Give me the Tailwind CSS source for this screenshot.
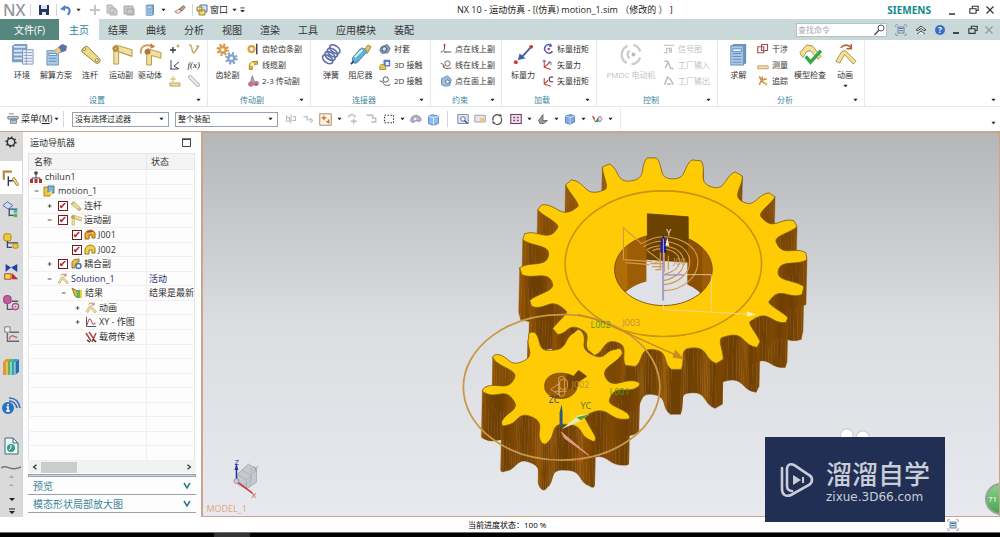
<!DOCTYPE html>
<html lang="zh-CN">
<head>
<meta charset="utf-8">
<title>NX 10 - 运动仿真</title>
<script src="https://cdn.jsdelivr.net/npm/@tailwindcss/browser@4"></script>
</head>
<body class="flex h-screen min-h-[537px] flex-col overflow-hidden bg-white font-['Open_Sans','Noto_Sans_CJK_SC',sans-serif] text-[8px] leading-[12px] text-[#333]">
<svg class="hidden">
  <symbol id="caret" viewBox="0 0 6 4"><path d="M.5 .5h5L3 3.5z" fill="#222"/></symbol>
  <symbol id="link" viewBox="0 0 24 24"><g stroke="#8a7a3a" fill="#f0dc8a"><path d="M3 7l3-3a2.500 2.500 0 0 1 3 0L21 16a3 3 0 0 1-4 4.500L3 9z"/><circle cx="5.500" cy="6.500" r="1.500" fill="#fff"/><circle cx="18.500" cy="18" r="1.500" fill="#fff"/></g></symbol>
  <symbol id="joint" viewBox="0 0 24 24"><g stroke="#b39a50" fill="#f3e09a"><path d="M3 5l3-3 17 5v7L9 9v13H4V9z"/><path d="M9 9l14 5" fill="none"/><circle cx="6" cy="6" r="3" fill="#b8823c"/><circle cx="6" cy="6" r="1" fill="#fff"/></g></symbol>
  <symbol id="doc" viewBox="0 0 24 24"><path d="M4 3l3-2h13v20l-3 2H4z" fill="#6b93bb"/><rect x="4" y="3" width="13" height="20" fill="#a9cbe8" stroke="#6c91b5"/><path d="M6 6h9v3H6zM6 11h9M6 14h9M6 17h9M6 20h9" stroke="#5f8bb8" fill="#e9f4ff"/></symbol>
  <symbol id="cog" viewBox="0 0 16 16"><circle cx="8" cy="8" r="6" fill="none" stroke="currentColor" stroke-width="3" stroke-dasharray="2.360 2.360"/><circle cx="8" cy="8" r="4" fill="currentColor" fill-opacity=".8" stroke="currentColor" stroke-width="2"/><circle cx="8" cy="8" r="1.800" fill="#fff"/></symbol>
  <symbol id="cube" viewBox="0 0 16 16"><path d="M2 4l7-2 5 2v8l-6 3-6-2z" fill="#7fa8e0" stroke="#4a6fb0"/><path d="M2 4l6 2 6-2M8 6v9" stroke="#dfeaff" fill="none"/></symbol>
  <symbol id="ghost" viewBox="0 0 16 16"><path d="M2 3v8h4V6H2M8 2v12M10 5h4v5h-4" fill="none" stroke="#bbb" stroke-width="1.500"/></symbol>
  <symbol id="curve" viewBox="0 0 16 16"><path d="M6 1v6c0 3-2 5-5 5M6 12h9" fill="none" stroke="#555" stroke-width="1.300"/><circle cx="6" cy="3" r="1.500" fill="#c44"/><circle cx="7" cy="12" r="1.500" fill="#889"/></symbol>
  <symbol id="axes" viewBox="0 0 16 16"><path d="M3 2v9l9 3M3 11l8-7" stroke="#c24a4a" fill="none" stroke-width="1.500"/><path d="M1 4l2-3 2 3M8 4h4v4" fill="none" stroke="#667ac0" stroke-width="1.300"/></symbol>
  <symbol id="restore" viewBox="0 0 12 12"><path d="M4 4V1.500h7v5H8.500M1 4.500h7.500v5.500H1z" fill="none" stroke="currentColor" stroke-width="1.300"/></symbol>
  <symbol id="anim" viewBox="0 0 24 24"><g stroke="#a8934a" fill="#f3e09a"><path d="M2 19L8 9l4-1 11 11-3 3L11 12l-5 9z"/></g><path d="M7 5c4-4 8-3 11 0m0-4v5h-5" stroke="#b85a35" stroke-width="1.600" fill="none"/></symbol>
  <symbol id="chart" viewBox="0 0 16 16"><path d="M2 1v13h13" stroke="#456" fill="none" stroke-width="1.300"/><path d="M3 12c2-10 4-10 6-4s4 2 5 1" stroke="#d04a6a" fill="none" stroke-width="1.400"/></symbol>
  <symbol id="frame" viewBox="0 0 16 16"><path d="M1 4V1h3M12 1h3v3M15 12v3h-3M4 15H1v-3" fill="none" stroke="#888"/><rect x="4" y="4" width="8" height="8" fill="#dfe9f5" stroke="#46658a"/><path d="M5 6h6M5 9h6" stroke="#46658a" stroke-width="1.500"/></symbol>
  <symbol id="minus" viewBox="0 0 8 8"><path d="M1 4h5" stroke="#444" stroke-width="1.200"/></symbol>
  <symbol id="plus" viewBox="0 0 8 8"><path d="M1 4h5M3.500 1.500v5" stroke="#444" stroke-width="1.200"/></symbol>
</svg>

<header class="flex h-[19px] shrink-0 items-center bg-white">
  <div class="flex w-[457px] shrink-0 items-center">
    <span class="ml-[3px] w-[27px] font-['Open_Sans'] text-[16px] leading-[18px] font-semibold text-[#94999e]">NX</span>
    <i class="h-3 w-px bg-gray-300"></i>
    <button aria-label="保存" class="ml-[7px]"><svg class="size-3" viewBox="0 0 12 12"><path d="M1 1h10v10H1z" fill="#26365c"/><path d="M3 1h6v4H3zM4 8h4v3H4z" fill="#dfe6f5"/></svg></button>
    <i class="ml-[6px] h-3 w-px bg-gray-300"></i>
    <button aria-label="撤消" class="ml-[3px]"><svg class="size-3" viewBox="0 0 12 12"><path d="M3 5c4-4 9 0 5 6" stroke="#4c86c8" stroke-width="2.200" fill="none"/><path d="M0 5l5-4v6z" fill="#4c86c8"/></svg></button>
    <svg class="ml-[4px] h-1 w-[5px]"><use href="#caret"/></svg>
    <button aria-label="剪切" class="ml-2"><svg class="size-3" viewBox="0 0 12 12"><path d="M6 1v10M1 6h10" stroke="#c5c5c5" stroke-width="2"/></svg></button>
    <button aria-label="复制" class="ml-[5px]"><svg class="size-3" viewBox="0 0 12 12"><path d="M1 1h5l2 3v5H1zM4 4h5l2 2v5H4z" fill="#d0d0d0" stroke="#b0b0b0"/></svg></button>
    <button aria-label="粘贴" class="ml-[5px]"><svg class="size-3" viewBox="0 0 12 12"><path d="M1 2h9v8H1zM4 5h7v6H4z" fill="#c8c8c8" stroke="#a8a8a8"/></svg></button>
    <button aria-label="报告" class="ml-[9px]"><svg class="size-3"><use href="#doc"/></svg></button>
    <svg class="ml-[5px] h-1 w-[5px]"><use href="#caret"/></svg>
    <button aria-label="橡皮" class="ml-2"><svg class="h-3 w-3" viewBox="0 0 14 12"><path d="M1 8l5-3 3 2-4 3z" fill="#eee" stroke="#a66"/><path d="M6 5l5-4 2 2-4 4z" fill="#e29a5a" stroke="#557"/></svg></button>
    <i class="ml-[6px] h-3 w-px bg-gray-300"></i>
    <button class="ml-[3px] flex items-center gap-[2px] text-[9px] text-[#222]"><svg class="size-3" viewBox="0 0 12 12"><path d="M4 1h7v7H4z" fill="#cfe0f3" stroke="#57779d"/><path d="M1 3h5v4H1zM3 6h6v5H3z" fill="#f2d97e" stroke="#9a8440"/></svg>窗口<svg class="ml-[2px] h-1 w-[5px]"><use href="#caret"/></svg></button>
    <svg class="ml-[3px] h-[6px] w-[5px]" viewBox="0 0 6 7"><path d="M.5 1h5M1 4h4L3 6z" stroke="#222" fill="#222"/></svg>
  </div>
  <h1 class="text-[9px] whitespace-pre text-[#222]">NX 10 - 运动仿真 - [(仿真) motion_1.sim （修改的 ） ]</h1>
  <div class="ml-auto flex items-center text-[#333]">
    <b class="mr-[15px] font-['Noto_Sans'] text-[10px] text-[#0f8a8d]">SIEMENS</b>
    <button aria-label="最小化" class="mr-[11px]"><svg class="size-3" viewBox="0 0 12 12"><path d="M3 10h6" stroke="currentColor" stroke-width="1.500"/></svg></button>
    <button aria-label="还原" class="mr-[6px]"><svg class="h-[10px] w-[10px]"><use href="#restore"/></svg></button>
    <button aria-label="关闭" class="mr-[5px]"><svg class="h-[10px] w-[10px]" viewBox="0 0 10 10"><path d="M1.500 1.500l7 7m0-7l-7 7" stroke="currentColor" stroke-width="1.200"/></svg></button>
  </div>
</header>

<nav class="flex h-[21px] shrink-0 items-stretch bg-[#c9d8d9] text-[10px] text-[#333]">
  <button class="w-[59px] bg-[#55877f] text-white">文件(F)</button>
  <button class="w-10 bg-white text-[#2b7f96]">主页</button>
  <button class="w-[38px]">结果</button><button class="w-[38px]">曲线</button><button class="w-[38px]">分析</button><button class="w-[38px]">视图</button><button class="w-[38px]">渲染</button><button class="w-[38px]">工具</button><button class="w-[58px]">应用模块</button><button class="w-[38px]">装配</button>
  <div class="ml-auto flex items-center">
    <label class="mr-2 flex h-[14px] w-[91px] items-center border border-[#b5c2c4] bg-white"><input aria-label="查找命令" placeholder="查找命令" class="w-[76px] pl-px text-[8px] outline-none placeholder:text-[#aaa]"><svg class="size-3" viewBox="0 0 12 12"><circle cx="8" cy="4" r="3" fill="none" stroke="#555"/><path d="M6 6l-4.500 5" stroke="#555" stroke-width="1.500"/></svg></label>
    <button aria-label="全屏" class="mr-2"><svg class="size-3"><use href="#frame"/></svg></button>
    <button aria-label="折叠" class="mr-2"><svg class="h-[10px] w-3" viewBox="0 0 12 10"><path d="M1 5l5-4 5 4-2 .5-3-2-3 2zM2 9l4-3 4 3" fill="#fff" stroke="#444"/></svg></button>
    <button aria-label="帮助" class="mr-[6px] size-[10px] rounded-full bg-[#3b6cc0] text-[8px] leading-[10px] font-bold text-white">?</button>
    <button aria-label="最小化" class="mr-[7px]"><svg class="h-[10px] w-[10px]" viewBox="0 0 10 10"><path d="M2 8h6" stroke="#222" stroke-width="1.600"/></svg></button>
    <button aria-label="还原" class="mr-[6px]"><svg class="h-[10px] w-[10px]"><use href="#restore"/></svg></button>
    <button aria-label="关闭" class="mr-[6px]"><svg class="h-[10px] w-[10px]" viewBox="0 0 10 10"><path d="M1.500 1.500l7 7m0-7l-7 7" stroke="#999" stroke-width="1.200"/></svg></button>
  </div>
</nav>

<section class="relative flex h-[67px] shrink-0 border-b border-gray-200 whitespace-nowrap">
  <div class="flex w-[208px] flex-col border-r border-gray-200">
    <div class="flex h-[54px] items-start pt-[3px] pl-1">
      <button class="flex w-9 flex-col items-center gap-[3px]"><svg class="size-[23px]" viewBox="0 0 24 24"><path d="M1 3l3-2h13v19H1z" fill="#7e9fc4"/><path d="M3 4h12M3 8h12M3 12h12M3 16h12" stroke="#d6e7f7" stroke-width="2"/><path d="M12 7h11v15H12z" fill="#eef3fa" stroke="#8397b8"/><path d="M13 10h9M13 13h9M13 16h9M13 19h9M16 7v15" stroke="#8ba0cc"/></svg>环境</button>
      <button class="flex w-8 flex-col items-center gap-[3px]"><svg class="size-[23px]" viewBox="0 0 24 24"><path d="M2 8h12v15H2z" fill="#a9cbe8" stroke="#7595b8"/><path d="M4 11h8v2H4zM4 16h8M4 19h8" stroke="#5f8bb8" fill="#fff"/><path d="M10 7l8-6 5 2-1 5-8 3z" fill="#5f70aa"/><path d="M10 7l4-3 3 5-4 2z" fill="#f0c878"/></svg>解算方案</button>
      <button class="flex w-9 flex-col items-center gap-[3px]"><svg class="size-[23px]"><use href="#link"/></svg>连杆</button>
      <button class="flex w-[26px] flex-col items-center gap-[3px]"><svg class="size-[23px]"><use href="#joint"/></svg>运动副</button>
      <button class="flex w-8 flex-col items-center gap-[3px]"><svg class="size-[23px]" viewBox="0 0 24 24"><path d="M6 9l3-3 14 4v6l-10-3v10H8V13z" fill="#f3e09a" stroke="#b39a50"/><circle cx="9" cy="9" r="3" fill="#a87a42"/><path d="M2 11C1 4 6 1 13 3" stroke="#d59a62" stroke-width="2" fill="none"/><path d="M12 0l5 4-5 2z" fill="#c67b4b"/></svg>驱动体</button>
      <div class="ml-[3px] grid grid-cols-2 gap-x-[6px] gap-y-1">
        <svg class="size-3" viewBox="0 0 12 12"><path d="M4 4v6M1 7h6" stroke="#334" stroke-width="1.300"/><circle cx="9" cy="3" r="1.500" fill="#c8b060"/></svg>
        <svg class="size-3" viewBox="0 0 12 12"><path d="M1 2c4-1 2 8 5 8M6 10l5-7M8 3h3" stroke="#c0a962" fill="none" stroke-width="1.500"/></svg>
        <svg class="size-3" viewBox="0 0 12 12"><path d="M2 1v9M1 10h8M10 3L5 7l5 3" stroke="#446" fill="none"/></svg>
        <i class="font-['Liberation_Serif'] text-[9px] text-[#222]">f(x)</i>
        <svg class="size-3" viewBox="0 0 12 12"><path d="M1 8h10v3H1z" fill="#efe0a0" stroke="#b5a35c"/><path d="M4 1v6M1 4h6" stroke="#cdb65c"/></svg>
        <svg class="size-3" viewBox="0 0 12 12"><path d="M2 2l8 8" stroke="#bbb" stroke-width="4" stroke-linecap="round"/><path d="M2 2l8 8" stroke="#eee" stroke-width="2" stroke-linecap="round"/></svg>
      </div>
    </div>
    <div class="flex items-center text-[#3b8699]"><span class="w-[194px] text-center">设置</span><svg class="ml-auto mr-[6px] h-1 w-[5px]"><use href="#caret"/></svg></div>
  </div>

  <div class="flex w-[103px] flex-col border-r border-gray-200">
    <div class="flex h-[54px] items-start pt-[3px]">
      <button class="flex w-[39px] flex-col items-center gap-[3px]"><svg class="size-[23px]" viewBox="0 0 24 24"><svg width="14" height="14" class="text-[#d99a45]"><use href="#cog"/></svg><svg x="9" y="9" width="14" height="14" class="text-[#7d9fd6]"><use href="#cog"/></svg></svg>齿轮副</button>
      <div class="flex flex-col gap-1">
        <button class="flex h-3 items-center gap-[3px]"><svg class="size-3" viewBox="0 0 16 16"><circle cx="6" cy="8" r="4" fill="none" stroke="#dba038" stroke-width="3"/><path d="M13 1v14" stroke="#445" stroke-width="2"/></svg>齿轮齿条副</button>
        <button class="flex h-3 items-center gap-[3px]"><svg class="size-3" viewBox="0 0 16 16"><path d="M3 14V9c0-5 5-6 11-6v4C9 7 7 9 7 14z" fill="#e0b13c" stroke="#8f7020"/><circle cx="7" cy="7" r="2.500" fill="#fff2b0"/></svg>线缆副</button>
        <button class="flex h-3 items-center gap-[3px]"><svg class="size-3" viewBox="0 0 16 16"><path d="M7 1l3 8h5v4H4z" fill="#a9a9b5" stroke="#777"/><circle cx="5" cy="12" r="3.500" fill="#d66a8a"/><circle cx="12" cy="12" r="2.500" fill="#d05858"/></svg>2-3 传动副</button>
      </div>
    </div>
    <div class="flex items-center text-[#3b8699]"><span class="w-[88px] text-center">传动副</span><svg class="ml-auto mr-[6px] h-1 w-[5px]"><use href="#caret"/></svg></div>
  </div>

  <div class="flex w-[120px] flex-col border-r border-gray-200">
    <div class="flex h-[54px] items-start pt-[3px] pl-1">
      <button class="flex w-8 flex-col items-center gap-[3px]"><svg class="size-[23px]" viewBox="0 0 24 24"><g fill="none" stroke="#5d6fa8" stroke-width="1.800"><ellipse cx="8" cy="17" rx="6" ry="3.600" transform="rotate(35 8 17)"/><ellipse cx="10.500" cy="13.500" rx="6" ry="3.600" transform="rotate(35 10.500 13.500)"/><ellipse cx="13" cy="10" rx="6" ry="3.600" transform="rotate(35 13 10)"/><ellipse cx="15.500" cy="6.500" rx="6" ry="3.600" transform="rotate(35 15.500 6.500)"/></g></svg>弹簧</button>
      <button class="flex w-[27px] flex-col items-center gap-[3px]"><svg class="size-[23px]" viewBox="0 0 24 24"><path d="M15 8l5-6 3 2-4 7z" fill="#e7bf5a" stroke="#aa8530"/><path d="M4 15l8-9c2-2 7 1 6 4l-9 10c-3 3-7-1-5-5z" fill="#63b1d4" stroke="#3c85ab"/><path d="M6 15l8-8" stroke="#d4f0fa" stroke-width="2"/><path d="M5 19l-3 3" stroke="#446" stroke-width="2"/></svg>阻尼器</button>
      <div class="ml-[5px] flex flex-col gap-1">
        <button class="flex h-3 items-center gap-[3px]"><svg class="size-3" viewBox="0 0 16 16"><path d="M3 5l8-3 4 5-3 6-8 1-3-4z" fill="#7f99bf" stroke="#56688d"/><circle cx="7" cy="8" r="3" fill="#dde6f4" stroke="#334"/></svg>衬套</button>
        <button class="flex h-3 items-center gap-[3px]"><svg class="size-3" viewBox="0 0 16 16"><path d="M6 1h9v9H6z" fill="#5a7ec8"/><path d="M9 4h4v4H9z" fill="#fff"/><path d="M1 9c3-4 9-1 8 5H1z" fill="#e6c84e" stroke="#907a28"/></svg>3D 接触</button>
        <button class="flex h-3 items-center gap-[3px]"><svg class="size-3" viewBox="0 0 16 16"><circle cx="9" cy="6" r="3.500" fill="none" stroke="#555" stroke-width="1.300"/><path d="M1 8c2 0 5 1 5 3s4 4 9 2" fill="none" stroke="#555" stroke-width="1.300"/></svg>2D 接触</button>
      </div>
    </div>
    <div class="flex items-center text-[#3b8699]"><span class="w-[106px] text-center">连接器</span><svg class="ml-auto mr-[6px] h-1 w-[5px]"><use href="#caret"/></svg></div>
  </div>

  <div class="flex w-[71px] flex-col border-r border-gray-200">
    <div class="flex h-[54px] flex-col gap-1 pt-[3px] pl-[9px]">
      <button class="flex h-3 items-center gap-[3px]"><svg class="size-3"><use href="#curve"/></svg>点在线上副</button>
      <button class="flex h-3 items-center gap-[3px]"><svg class="size-3" viewBox="0 0 16 16"><circle cx="10" cy="6" r="3.500" fill="none" stroke="#666" stroke-width="1.300"/><path d="M1 6c2 0 4 1 4 4s4 3 10 2" fill="none" stroke="#555" stroke-width="1.300"/><circle cx="5" cy="10" r="1.500" fill="#c55"/></svg>线在线上副</button>
      <button class="flex h-3 items-center gap-[3px]"><svg class="size-3" viewBox="0 0 16 16"><path d="M2 13V5l8-4 5 5-2 8-6 1z" fill="#9dc0e6" stroke="#53789e"/><circle cx="10" cy="9" r="2.500" fill="#fff" stroke="#446"/></svg>点在面上副</button>
    </div>
    <div class="flex items-center text-[#3b8699]"><span class="w-[58px] text-center">约束</span><svg class="ml-auto mr-[6px] h-1 w-[5px]"><use href="#caret"/></svg></div>
  </div>

  <div class="flex w-[95px] flex-col border-r border-gray-200">
    <div class="flex h-[54px] items-start pt-[3px] pl-1">
      <button class="flex w-[34px] flex-col items-center gap-[3px]"><svg class="size-[23px]" viewBox="0 0 24 24"><path d="M19 5L9 16" stroke="#445eae" stroke-width="2"/><path d="M6 18l2-7 6 5z" fill="#445eae"/><circle cx="20" cy="4" r="2" fill="#c33"/><circle cx="4" cy="20" r="2" fill="#c33"/></svg>标量力</button>
      <div class="ml-[2px] flex flex-col gap-1">
        <button class="flex h-3 items-center gap-[3px]"><svg class="size-3" viewBox="0 0 16 16"><path d="M12 3C6 0 2 6 4 10s7 5 10 1" fill="none" stroke="#4b5fae" stroke-width="2"/><circle cx="9" cy="8" r="1.800" fill="#c44"/><path d="M11 0l3 5-5 0z" fill="#4b5fae"/></svg>标量扭矩</button>
        <button class="flex h-3 items-center gap-[3px]"><svg class="size-3"><use href="#axes"/></svg>矢量力</button>
        <button class="flex h-3 items-center gap-[3px]"><svg class="size-3" viewBox="0 0 16 16"><path d="M3 4v8l9 3M3 12l5-5" stroke="#c24a4a" fill="none" stroke-width="1.500"/><path d="M15 3c-5-2-7 3-4 6h4" fill="none" stroke="#445" stroke-width="1.600"/></svg>矢量扭矩</button>
      </div>
    </div>
    <div class="flex items-center text-[#3b8699]"><span class="w-[80px] text-center">加载</span><svg class="ml-auto mr-[6px] h-1 w-[5px]"><use href="#caret"/></svg></div>
  </div>

  <div class="flex w-[121px] flex-col border-r border-gray-200">
    <div class="flex h-[54px] items-start pt-[3px] pl-[6px] text-[#c2c2c2]">
      <button class="flex w-[56px] flex-col items-center gap-[3px]"><svg class="size-[23px]" viewBox="0 0 24 24"><g fill="none" stroke="#ccc" stroke-width="2.500"><path d="M8 3a10 10 0 0 0-1 18M14 2a10 10 0 0 1 7 7M21 15a10 10 0 0 1-9 7"/><path d="M10 8a5 5 0 0 0 0 8"/></g><circle cx="14" cy="12" r="2" fill="#bbb"/></svg>PMDC 电动机</button>
      <div class="ml-[4px] flex flex-col gap-1">
        <button class="flex h-3 items-center gap-[3px]"><svg class="size-3" viewBox="0 0 16 16"><path d="M1 3h14M1 13h4V7h4v6M11 6v7" stroke="#bbb" fill="none" stroke-width="1.500"/></svg>信号图</button>
        <button class="flex h-3 items-center gap-[3px]"><svg class="size-3" viewBox="0 0 16 16"><path d="M2 3h4M3 12l4-8 3 8 4 1" stroke="#bbb" fill="none" stroke-width="2"/></svg>工厂输入</button>
        <button class="flex h-3 items-center gap-[3px]"><svg class="size-3" viewBox="0 0 16 16"><path d="M2 13l4-10 4 3 4 7M5 12h6" stroke="#bbb" fill="none" stroke-width="2"/></svg>工厂输出</button>
      </div>
    </div>
    <div class="flex items-center text-[#3b8699]"><span class="w-[108px] text-center">控制</span><svg class="ml-auto mr-[6px] h-1 w-[5px]"><use href="#caret"/></svg></div>
  </div>

  <div class="flex w-[147px] flex-col border-r border-gray-200">
    <div class="flex h-[54px] items-start pt-[3px] pl-1">
      <button class="flex w-[33px] flex-col items-center gap-[3px]"><svg class="size-[23px]"><use href="#doc"/></svg>求解</button>
      <div class="ml-[2px] flex w-8 flex-col gap-1">
        <button class="flex h-3 items-center gap-[3px]"><svg class="size-3" viewBox="0 0 16 16"><path d="M1 5h8v8H1zM6 2h8v8H6z" fill="none" stroke="#a05050" stroke-width="1.500"/></svg>干涉</button>
        <button class="flex h-3 items-center gap-[3px]"><svg class="size-3" viewBox="0 0 16 16"><path d="M1 9h14v4H1z" fill="#f4d8a8" stroke="#c09050"/></svg>测量</button>
        <button class="flex h-3 items-center gap-[3px]"><svg class="size-3" viewBox="0 0 16 16"><path d="M3 2l3 5-3 6M6 7l7-2M6 8l7 5M7 7V2" stroke="#d98538" stroke-width="2" fill="none"/><circle cx="12" cy="12" r="2" fill="#e8c060"/></svg>追踪</button>
      </div>
      <button class="ml-[5px] flex w-8 flex-col items-center gap-[3px]"><svg class="size-[23px]" viewBox="0 0 24 24"><path d="M1 10l7-8 6 1 9 11-3 3-8-9-4 1-4 6z" fill="#f3e09a" stroke="#a39148"/><path d="M7 14l5 6L23 8" stroke="#35a84a" stroke-width="3.500" fill="none"/></svg>模型检查</button>
      <button class="ml-[3px] flex w-8 flex-col items-center gap-[3px]"><svg class="size-[23px]"><use href="#anim"/></svg>动画<svg class="h-1 w-[5px]"><use href="#caret"/></svg></button>
    </div>
    <div class="flex items-center text-[#3b8699]"><span class="w-[134px] text-center">分析</span><svg class="ml-auto mr-[6px] h-1 w-[5px]"><use href="#caret"/></svg></div>
  </div>
  <svg class="mt-auto mr-1 mb-[4px] ml-auto h-1 w-[5px]"><use href="#caret"/></svg>
</section>

<section class="flex h-[25px] shrink-0 items-center border-b border-[#c4a493] text-[9px] text-[#222]">
  <button class="flex w-[63px] items-center gap-[2px] pl-[7px] text-[9px]"><svg class="size-3 shrink-0" viewBox="0 0 14 14"><path d="M1 4h12v3H1zM4 7h7v5H4z" fill="#c9d3e0" stroke="#6d7888"/><path d="M2 1h6M5 9h5" stroke="#6d7888"/></svg><span>菜单(<u>M</u>)</span><svg class="h-1 w-[5px] shrink-0"><use href="#caret"/></svg></button>
  <i class="h-4 w-px bg-gray-300"></i>
  <span class="relative ml-2 flex h-[15px] w-[97px] items-center border border-gray-400"><select aria-label="过滤器" class="h-full w-full appearance-none pl-[2px] text-[8px] leading-[12px]"><option>没有选择过滤器</option></select><svg class="absolute right-1 h-1 w-[5px]"><use href="#caret"/></svg></span>
  <span class="relative ml-[6px] flex h-[15px] w-[103px] items-center border border-gray-400"><select aria-label="范围" class="h-full w-full appearance-none pl-[2px] text-[8px] leading-[12px]"><option>整个装配</option></select><svg class="absolute right-1 h-1 w-[5px]"><use href="#caret"/></svg></span>
  <div class="ml-[7px] flex items-center gap-[5px]">
    <svg class="size-3"><use href="#ghost"/></svg>
    <svg class="size-3" viewBox="0 0 16 16"><path d="M2 5h5v4h5M11 7l3 3-3 3" fill="none" stroke="#c5c5c5" stroke-width="1.800"/></svg>
    <svg class="size-[13px]" viewBox="0 0 16 16"><rect x="1" y="1" width="14" height="14" fill="#fff4e8" stroke="#9c7452"/><path d="M6 3v6M3 6h6M9 10l3 2V8" stroke="#c06a30" fill="none" stroke-width="1.500"/></svg>
    <svg class="h-1 w-[5px]"><use href="#caret"/></svg>
    <svg class="size-3" viewBox="0 0 16 16"><path d="M2 6c1-5 8-5 9 0M9 8v7M5 11h8" fill="none" stroke="#bbb" stroke-width="1.800"/></svg>
    <svg class="ml-[2px] size-3" viewBox="0 0 16 16"><path d="M1 3h8v4h4v6M7 12h7" fill="none" stroke="#bbb" stroke-width="1.800"/></svg>
    <svg class="size-3" viewBox="0 0 16 16"><rect x="2" y="3" width="12" height="10" fill="none" stroke="#333" stroke-width="1.500" stroke-dasharray="2 2"/></svg>
    <svg class="h-1 w-[5px]"><use href="#caret"/></svg>
    <svg class="size-3" viewBox="0 0 16 16"><path d="M1 10c0-6 6-8 10-6s5 6 2 7-4-2-6 0-6 2-6-1z" fill="#b7b2ce" stroke="#746a92"/><circle cx="7" cy="8" r="1.500" fill="#fff"/></svg>
    <svg class="size-[13px]" viewBox="0 0 16 16"><path d="M2 4l5-2 7 2v9l-6 2-6-2z" fill="#8dbcf0" stroke="#4377b5"/><path d="M2 4l6 2 6-2M8 6v9" fill="none" stroke="#e5f1ff"/></svg>
    <i class="ml-[2px] h-4 w-px bg-gray-300"></i>
    <svg class="ml-1 size-3" viewBox="0 0 16 16"><path d="M1 2h14v12H1z" fill="#dde6f2" stroke="#5d7597"/><circle cx="8" cy="8" r="3" fill="#fff" stroke="#346"/><path d="M10 10l4 4" stroke="#346" stroke-width="1.500"/></svg>
    <svg class="size-3" viewBox="0 0 16 16"><path d="M1 3h14v9H1z" fill="#e8e4ea" stroke="#89879b"/><path d="M8 7h6v4H8z" fill="#f2c56b"/></svg>
    <svg class="size-3" viewBox="0 0 16 16"><path d="M3 10A5.500 5.500 0 0 1 12 4M13 6a5.500 5.500 0 0 1-9 7" fill="none" stroke="#444" stroke-width="1.600"/><path d="M10 2h4v4zM6 14H2v-4z" fill="#444"/></svg>
    <svg class="ml-[2px] size-3" viewBox="0 0 16 16"><rect x="1" y="2" width="14" height="12" fill="#f5e4ee" stroke="#69476c" stroke-width="1.500"/><path d="M4 5h3v2H4zM9 5h3v2H9zM4 9h3v2H4zM9 9h3v2H9z" fill="#935a8c"/></svg>
    <svg class="h-1 w-[5px]"><use href="#caret"/></svg>
    <svg class="size-3" viewBox="0 0 16 16"><path d="M2 10l6-8v8h6l-5 4H4z" fill="#999" stroke="#555"/></svg>
    <svg class="h-1 w-[5px]"><use href="#caret"/></svg>
    <svg class="size-3"><use href="#cube"/></svg>
    <svg class="h-1 w-[5px]"><use href="#caret"/></svg>
    <svg class="size-3" viewBox="0 0 16 16"><path d="M1 3l4 9V6z" fill="#c33"/><path d="M5 12l5-7v7z" fill="#3a9a4a"/><path d="M12 4l3 4-3 4-3-4z" fill="#e9ddf4" stroke="#75639b"/></svg>
    <svg class="h-1 w-[5px]"><use href="#caret"/></svg>
    <i class="ml-[2px] h-5 w-px bg-gray-200"></i>
  </div>
  <svg class="mt-2 mr-1 ml-auto h-1 w-[5px]"><use href="#caret"/></svg>
</section>

<main class="flex min-h-0 flex-1">
  <aside class="flex w-[23px] shrink-0 flex-col items-center border-r border-gray-300 bg-[#dadadb]">
    <button aria-label="设置" class="flex h-[29px] items-start pt-1"><svg class="size-3 text-[#333]" viewBox="0 0 16 16"><circle cx="8" cy="8" r="5" fill="none" stroke="currentColor" stroke-width="2"/><circle cx="8" cy="8" r="6.500" fill="none" stroke="currentColor" stroke-width="2" stroke-dasharray="2 3"/></svg></button>
    <button aria-label="运动导航器" class="flex h-[33px] w-full items-center justify-center bg-white"><svg class="size-[18px]" viewBox="0 0 20 20"><path d="M2 12V3h9" fill="none" stroke="#b48b3c" stroke-width="2.500"/><path d="M7 8v11M7 13h5" stroke="#335" stroke-width="1.500"/><path d="M13 11l4 6" stroke="#8d7a30" stroke-width="3.500" stroke-linecap="round"/><path d="M13 11l4 6" stroke="#ffe680" stroke-width="1.800" stroke-linecap="round"/></svg></button>
    <button aria-label="装配导航器" class="flex h-[31px] items-center"><svg class="size-[18px]" viewBox="0 0 20 20"><path d="M1 5l5-4 6 4-5 4z" fill="#cfdcf5" stroke="#4664a5"/><path d="M8 8v9M8 9h9M8 16h5" stroke="#357" stroke-width="1.500" fill="none"/><path d="M13 10h4v3h-4z" fill="#35b8c8"/><path d="M13 14h4v4h-4z" fill="#5db545"/></svg></button>
    <button aria-label="部件导航器" class="flex h-[31px] items-center"><svg class="size-[18px]" viewBox="0 0 20 20"><rect x="2" y="2" width="8" height="8" rx="2" fill="#f2c838" stroke="#a47f16"/><path d="M6 10v7h5M6 12h12" stroke="#446" stroke-width="1.500" fill="none"/><rect x="12" y="13" width="6" height="5" rx="2" fill="#f2c838" stroke="#a47f16"/></svg></button>
    <button aria-label="约束导航器" class="flex h-[31px] items-center"><svg class="size-[18px]" viewBox="0 0 20 20"><path d="M4 1l6 4-6 5zM17 1l-7 4 7 5z" fill="#2343a8"/><path d="M3 12h7v6H3z" fill="#f2e23a" stroke="#a33"/><path d="M11 11l7 7h-7z" fill="#c52a2a"/></svg></button>
    <button aria-label="视图" class="flex h-[31px] items-center"><svg class="size-[18px]" viewBox="0 0 20 20"><path d="M2 4c0-3 8-3 8 0v5c0 2-8 2-8 0z" fill="#c958a0" stroke="#82336a"/><path d="M6 11v6h6M11 8h7" stroke="#557" stroke-width="1.500" fill="none"/><circle cx="15" cy="14" r="3.500" fill="none" stroke="#b34e88" stroke-width="1.500"/><circle cx="15" cy="14" r="1" fill="#b34e88"/></svg></button>
    <button aria-label="结果" class="flex h-[31px] items-center"><svg class="size-[18px]" viewBox="0 0 20 20"><path d="M3 2h6v6H3z" fill="#eee" stroke="#777"/><path d="M9 8h10M6 9v9h13" stroke="#668" fill="none" stroke-width="1.500"/><path d="M8 16c2-7 5-3 9-2" stroke="#d06060" fill="none" stroke-width="1.500"/></svg></button>
    <button aria-label="重用库" class="flex h-[35px] items-center"><svg class="size-5" viewBox="0 0 20 20"><path d="M2 5l3-3h4L6 5v13H2z" fill="#e8932e"/><path d="M6 5l3-3h4l-3 3v13H6z" fill="#6bb536"/><path d="M10 5l3-3h4l-3 3v13h-4z" fill="#2ca6c4"/><path d="M14 5l4-3v13l-4 3z" fill="#276fae"/><path d="M6 5v13M10 5v13M14 5v13" stroke="#fff" stroke-width=".8"/></svg></button>
    <button aria-label="信息" class="flex h-[43px] items-center"><svg class="size-5" viewBox="0 0 20 20"><circle cx="7" cy="12" r="6" fill="#2572bd"/><path d="M7 8v1.500M5.500 11H7v4M5 15h4" stroke="#fff" stroke-width="1.600" fill="none"/><path d="M8 2c6 0 10 4 11 10M8 5c4 0 7 3 8 7" fill="none" stroke="#3670b8" stroke-width="1.700"/></svg></button>
    <button aria-label="历史" class="flex h-[37px] items-center"><svg class="size-[18px]" viewBox="0 0 18 18"><path d="M3 1h8l5 5v11H3z" fill="#eaf4f4" stroke="#3f6c7c"/><path d="M11 1v5h5" fill="none" stroke="#3f6c7c"/><circle cx="9" cy="11" r="4" fill="#3a9d88"/><path d="M9 8v3l-2 2" stroke="#fff" fill="none"/></svg></button>
    <svg class="h-[52px] w-5" viewBox="0 0 20 52"><path d="M0 4c6-5 9 5 20-1" fill="none" stroke="#777" stroke-width="1.500"/><path d="M8 14h5l-2.500-3zM8 22h5l-2.500-2z" fill="#aaa"/><path d="M8 34h6l-3 3zM8 47h6l-3 3z" fill="#222"/><path d="M8 45h6" stroke="#222"/></svg>
  </aside>

  <section class="flex w-[178px] shrink-0 flex-col bg-[#fdfdfd] px-[5px] text-[9px] leading-[12px]">
    <div class="flex h-[21px] items-center justify-between pr-[5px] pl-[2px]"><h2 class="text-[#333]">运动导航器</h2><svg class="size-[9px]" viewBox="0 0 10 10"><path d="M.5 1.500h9v8h-9z" fill="none" stroke="#222"/><path d="M0 1h10" stroke="#222"/></svg></div>
    <table class="h-[308px] w-[167px] table-fixed border-collapse border border-[#e9e4e6] text-left whitespace-nowrap">
      <thead><tr class="h-4 bg-[#f5f4f5]"><th class="w-[118px] border-r border-b border-gray-200 pl-[5px] font-normal">名称</th><th class="border-b border-gray-200 pl-1 font-normal">状态</th></tr></thead>
      <tbody class="[&_input]:m-0 [&_input]:flex [&_input]:size-[10px] [&_input]:shrink-0 [&_input]:appearance-none [&_input]:items-center [&_input]:justify-center [&_input]:border [&_input]:border-[#6b2020] [&_input]:bg-white [&_input:checked]:before:font-['DejaVu_Sans'] [&_input:checked]:before:text-[10px] [&_input:checked]:before:leading-[10px] [&_input:checked]:before:text-[#b3201f] [&_input:checked]:before:content-['✔'] [&_td]:h-[14px] [&_td]:overflow-hidden [&_td]:border-b [&_td]:border-[#f2eff3] [&_td]:p-0 [&_td:first-child]:border-r [&_td:last-child]:pl-[2px]">
        <tr><td><div class="flex items-center gap-[3px] pl-px"><svg class="size-3" viewBox="0 0 12 12"><circle cx="6" cy="2" r="1.800" fill="#444"/><path d="M6 3v4M2 9V7h8v2" stroke="#444" fill="none"/><path d="M0 8h3v4H0zM4.500 8h3v4h-3zM9 8h3v4H9z" fill="#a33"/></svg>chilun1</div></td><td></td></tr>
        <tr><td><div class="flex items-center gap-[3px] pl-[5px]"><svg class="size-[6px]"><use href="#minus"/></svg><svg class="size-3" viewBox="0 0 12 12"><path d="M1 2h6v9H1z" fill="#f2cb3b" stroke="#a5851d"/><path d="M5 1h6v7H5z" fill="#7eb5d8" stroke="#4c7b98"/><path d="M4 8l5-2v5z" fill="#f5dc60"/></svg>motion_1</div></td><td></td></tr>
        <tr><td><div class="flex items-center gap-[2px] pl-[18px]"><svg class="mr-[3px] size-[6px]"><use href="#plus"/></svg><input type="checkbox" checked aria-label="连杆"><svg class="size-3"><use href="#link"/></svg>连杆</div></td><td></td></tr>
        <tr><td><div class="flex items-center gap-[2px] pl-[18px]"><svg class="mr-[3px] size-[6px]"><use href="#minus"/></svg><input type="checkbox" checked aria-label="运动副"><svg class="size-3"><use href="#joint"/></svg>运动副</div></td><td></td></tr>
        <tr><td><div class="flex items-center gap-[2px] pl-[43px]"><input type="checkbox" checked aria-label="J001"><svg class="size-3" viewBox="0 0 12 12"><path d="M1 10V5c2-5 8-5 10-1v5H8V6H5v4z" fill="#edb333" stroke="#9a6417"/><path d="M3 3l6-1" stroke="#a44" stroke-width="1.500"/></svg>J001</div></td><td></td></tr>
        <tr><td><div class="flex items-center gap-[2px] pl-[43px]"><input type="checkbox" checked aria-label="J002"><svg class="size-3" viewBox="0 0 12 12"><path d="M1 10V5c2-5 8-5 10-1v5H8V6H5v4z" fill="#f0d34b" stroke="#957b1d"/></svg>J002</div></td><td></td></tr>
        <tr><td><div class="flex items-center gap-[2px] pl-[18px]"><svg class="mr-[3px] size-[6px]"><use href="#plus"/></svg><input type="checkbox" checked aria-label="耦合副"><svg class="size-3" viewBox="0 0 12 12"><path d="M2 10V5c0-3 3-4 7-4v3C6 4 5 6 5 10z" fill="#e7c14d" stroke="#907527"/><circle cx="8.500" cy="8" r="2.500" fill="#fff" stroke="#4774b9" stroke-width="1.500"/></svg>耦合副</div></td><td></td></tr>
        <tr class="text-[#2b3170]"><td><div class="flex items-center gap-[2px] pl-[18px]"><svg class="mr-[2px] size-[6px]"><use href="#minus"/></svg><svg class="size-3"><use href="#anim"/></svg>Solution_1</div></td><td>活动</td></tr>
        <tr><td><div class="flex items-center gap-[2px] pl-[32px]"><svg class="mr-[2px] size-[6px]"><use href="#minus"/></svg><svg class="size-3" viewBox="0 0 12 12"><path d="M1 1l5 3 1 7-3-2z" fill="#e6bd35" stroke="#8f762a"/><path d="M6 3h5v8H7z" fill="#55b96c"/><path d="M9 3h2v8H9z" fill="#e0d03a"/></svg>结果</div></td><td>结果是最新</td></tr>
        <tr><td><div class="flex items-center gap-[2px] pl-[46px]"><svg class="mr-[2px] size-[6px]"><use href="#plus"/></svg><svg class="size-3"><use href="#anim"/></svg>动画</div></td><td></td></tr>
        <tr><td><div class="flex items-center gap-[2px] pl-[46px]"><svg class="mr-[2px] size-[6px]"><use href="#plus"/></svg><svg class="size-3"><use href="#chart"/></svg>XY - 作图</div></td><td></td></tr>
        <tr><td><div class="flex items-center gap-[2px] pl-[56px]"><svg class="size-3" viewBox="0 0 12 12"><path d="M1 2l5 8M4 1l5 7M7 11l4-9" stroke="#b34444" stroke-width="1.500"/><path d="M2 9l3 2M8 8l3 3" stroke="#333" stroke-width="1.500"/></svg>载荷传递</div></td><td></td></tr>
        <tr><td>&nbsp;</td><td></td></tr><tr><td>&nbsp;</td><td></td></tr><tr><td>&nbsp;</td><td></td></tr><tr><td>&nbsp;</td><td></td></tr><tr><td>&nbsp;</td><td></td></tr><tr><td>&nbsp;</td><td></td></tr><tr><td>&nbsp;</td><td></td></tr><tr><td>&nbsp;</td><td></td></tr>
      </tbody>
    </table>
    <div class="flex h-3 items-center bg-[#f3f2f3] px-1"><svg class="size-[6px]" viewBox="0 0 6 8"><path d="M5 1L1 4l4 3" fill="none" stroke="#333" stroke-width="1.500"/></svg><i class="ml-[3px] h-[11px] w-9 bg-[#cdcccd]"></i><svg class="ml-auto size-[6px]" viewBox="0 0 6 8"><path d="M1 1l4 3-4 3" fill="none" stroke="#333" stroke-width="1.500"/></svg></div>
    <div class="mt-px h-[3px] border border-gray-400 bg-gray-300"></div>
    <button class="flex h-[18px] items-center justify-between border-b border-gray-400 px-[5px] text-[10px] text-[#3b8699]">预览<svg class="h-[7px] w-2" viewBox="0 0 8 7"><path d="M1 1l3 5 3-5" fill="none" stroke="#2f7a88" stroke-width="1.500"/></svg></button>
    <button class="flex h-[18px] items-center justify-between border-b border-gray-400 px-[5px] text-[10px] text-[#3b8699]">模态形状局部放大图<svg class="h-[7px] w-2" viewBox="0 0 8 7"><path d="M1 1l3 5 3-5" fill="none" stroke="#2f7a88" stroke-width="1.500"/></svg></button>
  </section>

  <section class="relative min-w-0 flex-1 border border-[#c9a58a] border-l-2 bg-linear-to-b from-[#b5b6b8] via-[#dcdde1] to-[#e8e9ee]">
    <svg class="block h-full w-full" viewBox="204 133 795 384" preserveAspectRatio="xMidYMid meet" font-family="Open Sans" font-size="9">
      <g id="bigGear"></g>
      <clipPath id="bore"><path d="M648 236V214l41 3v22a49 36 0 1 1-41-3z"/></clipPath>
      <g clip-path="url(#bore)">
        <path d="M600 200h130v110H600z" fill="#9c5d05"/>
        <path d="M689 230h14v80h-14z" fill="#8d5000"/><path d="M614 230h14v60h-14z" fill="#b06c05"/>
        <path d="M647 210h42v52h-42z" fill="#6c4200"/>
        <path d="M647 282v-22l41 3v22a49 36 0 1 1-41-3z" fill="#dfe1e7"/>
      </g>
      <path d="M648 236V214l41 3v22a49 36 0 1 1-41-3z" fill="none" stroke="#6d4a08" stroke-width=".8"/>
      <ellipse cx="664" cy="264" rx="98.500" ry="73" fill="none" stroke="#c8950a" stroke-width="1.600"/>
      <g fill="none" stroke="#d19a4e" stroke-width="1.100">
        <path d="M653 262l-29-2v-32l18 16 6-3c18-9 45-1 50 16 4 18-13 34-34 34"/>
        <path d="M650 265l-24-2M644 247c18-11 42-4 46 11 3 14-10 26-26 27M647 250c15-8 34-3 37 9 3 11-8 20-20 22M648 251l13 10-8 3M653 251c10-5 26 0 27 9s-6 12-16 15M651 264h14M653 267h10M656 270h6M661 250v20M665 252v20M669 256v14"/>
      </g>
      <path d="M664 301v-45M664 275h21" stroke="#2a2ab8" stroke-width="1.400"/><path d="M664 235l3 8v10h-6V243z" fill="#1c1c9c"/>
      <path d="M664 310V239M664 275h48v38M664 310l92 5" fill="none" stroke="#f1d5b2" stroke-width="1" opacity=".8"/><path d="M748 312l9 3-9 2zM668 238l2 8h-4z" fill="#fff0c0"/>
      <text x="667" y="236" fill="#f2e8cf">Y</text><text x="674" y="265" fill="#c99a62">J00</text>
      <g id="smallGear"></g>
      <clipPath id="bore2"><path d="M574 377l5-6 8 6-9 6c1 22-33 20-33 4 0-14 18-16 29-10z"/></clipPath>
      <g clip-path="url(#bore2)"><path d="M540 365h50v40h-50z" fill="#9a5c00"/><path d="M567 365h20v25h-20z" fill="#744300"/></g>
      <path d="M574 377l5-6 8 6-9 6c1 22-33 20-33 4 0-14 18-16 29-10z" fill="none" stroke="#6d4a08" stroke-width=".8"/>
      <g fill="none" stroke="#d0a061"><path d="M551 390l9-6v12z"/><rect x="559" y="377" width="6" height="20" rx="3"/><rect x="560" y="380" width="8" height="10" rx="3"/><path d="M555 392h12"/></g>
      <ellipse cx="562" cy="388" rx="98.500" ry="73" fill="none" stroke="#c99746" stroke-width="1.800"/>
      <path d="M578 315c28 6 50 20 102 42" fill="none" stroke="#c48c1c" stroke-width="1.400"/><path d="M685 360l-12-2 3-8z" fill="#c58e20"/>
      <text x="591" y="329" fill="#4f9a1c">L002</text><text x="623" y="327" fill="#c48b3e">J003</text><text x="572" y="389" fill="#c48b3e">J002</text><text x="610" y="396" fill="#4f9a1c">L001</text>
      <text x="549" y="404" fill="#34347e">ZC</text><text x="581" y="410" fill="#55753a">YC</text><text x="575" y="463" font-size="7" fill="#d34b2e">XC</text>
      <path d="M562 405l-2 8v14h3v-14z" fill="#2d5b80"/><path d="M562 430l17-14 11-1-10 7z" fill="#e5edb0"/><path d="M577 418l13-3-9 6z" fill="#52a039"/><path d="M562 433l27 23-24-17z" fill="#e69a8c" stroke="#e69a8c"/>
      <g><path d="M237 475l11-10 8 5v13l-10 7-9-5z" fill="#c5c9ce" stroke="#a8adb3"/><path d="M237 475l9 6 10-11M246 481v9M241 471l9 5v10M242 487l9-6v-12" fill="none" stroke="#b0b4ba"/><path d="M236 482v-17" stroke="#24349a" stroke-width="1.500"/><path d="M234 471l2-6 2 6z" fill="#24349a"/><path d="M236 482l16 12" stroke="#c53b3b" stroke-width="1.500"/><circle cx="236" cy="482" r="2.500" fill="#ccc" stroke="#777" stroke-width=".6"/><text x="234" y="466" font-size="8" fill="#24349a">Z</text><text x="253" y="472" font-size="8" fill="#5b9c62">Y</text><text x="251" y="499" font-size="8" fill="#c53b3b">X</text></g>
      <text x="206" y="513" fill="#e0a77c">MODEL_1</text>
      <g fill="#fff" stroke="#d2d3d7" stroke-width="1.500"><circle cx="848" cy="436" r="6.500"/><circle cx="864" cy="438" r="6.500"/></g>
    </svg>
    <div class="absolute right-[54px] -bottom-[6px] flex h-[85px] w-[180px] items-center gap-3 bg-[#212f55] pl-[15px] text-[#c9cdd6]">
      <svg class="h-9 w-[34px]" viewBox="0 0 34 36"><g fill="none" stroke="currentColor" stroke-width="2.600" stroke-linecap="round"><path d="M2 6v21c0 6 4 8 9 6l18-10c4-3 4-8 0-10L14 3C10 1 7 3 7 7v17c0 3 2 5 5 5"/></g><path d="M13 13l8 5-8 5z" fill="currentColor"/><path d="M23 15v6" stroke="currentColor" stroke-width="2"/></svg>
      <div><div class="font-['Noto_Sans_CJK_SC'] text-[26px] leading-[32px] font-medium">溜溜自学</div><div class="mt-[2px] font-['DejaVu_Sans'] text-[12px] leading-[12px]">zixue.3D66.com</div></div>
    </div>
    <div class="absolute right-0 bottom-0 h-[33px] w-[14px] overflow-hidden"><div class="size-8 rounded-full border-2 border-[#9aa39a] bg-linear-to-b from-[#8ad08a] to-[#43a850] pl-px text-[8px] leading-7 text-white">71</div></div>
  </section>
</main>

<footer class="shrink-0 bg-white">
  <div class="flex h-[15px] items-center"><span class="ml-[468px] text-[8px] text-black">当前进度状态：100 %</span><svg class="mr-[41px] ml-auto size-3"><use href="#frame"/></svg></div>
  <div class="h-[5px] border-t border-gray-500 bg-black"><i class="ml-[214px] block h-1 w-9 bg-[#333]"></i></div>
</footer>

<script>
// Each tooth: first tip corner, second tip corner, then the root that follows it (clockwise).
const big = [[648,158,657,158,672,179],[693,160,702,161,712,187],[736,172,743,176,742,201],[770,193,776,197,762,217],[795,221,798,227,777,242],[807,253,808,260,779,272],[805,287,803,295,770,302],[789,318,787,323,751,322],[761,342,758,348,723,338],[724,360,717,364,689,349],[682,370,672,370,653,350],[636,367,626,366,618,343],[595,356,588,350,582,330],[558,335,553,329,567,312],[532,307,530,301,553,284],[522,275,520,268,549,255],[523,240,525,234,558,228],[538,210,542,205,578,207],[566,185,572,180,605,190],[603,167,610,164,632,181]];
const small = [[575,333,583,333,592,355],[616,350,623,354,606,378],[637,382,638,388,610,400],[629,415,626,420,585,417],[596,438,591,441,563,425],[549,442,541,442,533,418],[507,426,502,422,515,403],[486,394,485,388,515,378],[495,361,497,355,525,361],[529,338,535,333,549,351]];
function outline(teeth, cap) {
  const pts = [], n = teeth.length;
  const side = (root, tip, dir, rev) => {
    const dx = tip[0] - root[0], dy = tip[1] - root[1], k = dx * dir[0] + dy * dir[1];
    const t = [dir[0] * k, dir[1] * k], r = [dx - t[0], dy - t[1]], out = [];
    const c1 = [root[0] + t[0] * 0.85, root[1] + t[1] * 0.85];
    const c2 = [root[0] + t[0] * 0.5 + r[0] * 0.65, root[1] + t[1] * 0.5 + r[1] * 0.65];
    for (let i = 0; i <= 10; i++) {
      const u = i / 10, v = 1 - u;
      out.push([0, 1].map(a => v*v*v*root[a] + 3*v*v*u*c1[a] + 3*v*u*u*c2[a] + u*u*u*tip[a]));
    }
    return rev ? out.reverse() : out;
  };
  teeth.forEach((t, i) => {
    const q = teeth[(i + 1) % n], a = [t[2], t[3]], b = [q[0], q[1]], root = [t[4], t[5]];
    const len = Math.hypot(b[0] - a[0], b[1] - a[1]), dir = [(b[0] - a[0]) / len, (b[1] - a[1]) / len];
    pts.push(...side(root, a, dir, true), ...side(root, b, dir, false).slice(1));
    // Round the tooth tip outwards.
    const w = [q[2] - q[0], q[3] - q[1]], l = Math.hypot(...w);
    if (cap) [0.25, 0.5, 0.75].forEach(u => { const h = cap * 4 * u * (1 - u); pts.push([q[0] + w[0] * u + w[1] / l * h, q[1] + w[1] * u - w[0] / l * h]); });
  });
  return pts;
}
function gear(id, teeth, depth, cap) {
  const p = outline(teeth, cap), n = p.length, quads = [];
  p.forEach((a, i) => {
    const b = p[(i + 1) % n];
    if (b[0] - a[0] > 0.05) return;
    // Shade from the averaged slope of the neighbouring edges.
    const f = p[(i + n - 2) % n], g = p[(i + 3) % n], dx = g[0] - f[0], dy = g[1] - f[1];
    const s = dy / (Math.hypot(dx, dy) || 1);
    const light = 22 + (s < 0 ? 8 : 5) * Math.abs(s);
    const c = `hsl(34 96% ${light.toFixed(1)}%)`;
    quads.push([a[1] + b[1], `<path d="M${a}L${b}l-1 ${depth}L${a[0] - 1} ${a[1] + depth}z" fill="${c}" stroke="${c}" stroke-width=".4"/>`]);
  });
  quads.sort((x, y) => x[0] - y[0]);
  document.getElementById(id).innerHTML = quads.map(q => q[1]).join('') + `<path d="M${p.join('L')}z" fill="#ffcb05" stroke="#7a5a10" stroke-width=".8" stroke-linejoin="round"/>`;
}
gear('bigGear', big, 45, 0);
gear('smallGear', small, 46, 3);
</script>
</body>
</html>
